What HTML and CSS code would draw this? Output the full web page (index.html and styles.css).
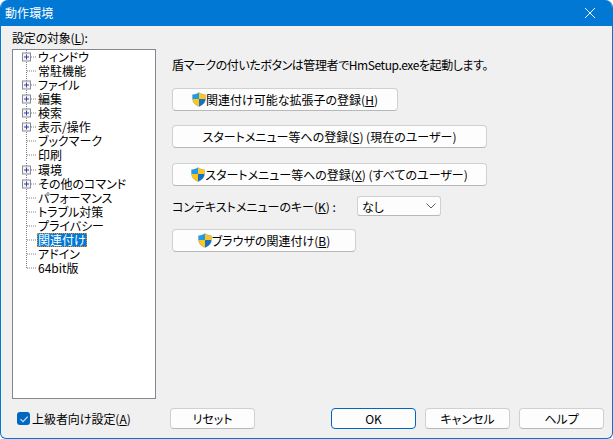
FILE: index.html
```html
<!DOCTYPE html>
<html lang="ja">
<head>
<meta charset="utf-8">
<title>動作環境</title>
<link rel="stylesheet" href="styles.css">
</head>
<body>
<svg class="defs" width="0" height="0" aria-hidden="true">
  <symbol id="shield" viewBox="0 0 14 15">
    <path d="M7 0.5C5 2 3 2.6 0.5 2.7V7H7z" fill="#1f9be8"/>
    <path d="M7 0.5C9 2 11 2.6 13.5 2.7V7H7z" fill="#ffc61a"/>
    <path d="M0.5 7C0.7 10.8 3.4 13.2 7 14.5V7z" fill="#ffc61a"/>
    <path d="M13.5 7C13.3 10.8 10.6 13.2 7 14.5V7z" fill="#1472c4"/>
    <path d="M7 0.5C5 2 3 2.6 0.5 2.7V7C0.7 10.8 3.4 13.2 7 14.5C10.6 13.2 13.3 10.8 13.5 7V2.7C11 2.6 9 2 7 0.5z" fill="none" stroke="#5a7f9c" stroke-width=".5" opacity=".6"/>
  </symbol>
  <symbol id="leaf" viewBox="0 0 26 14">
    <path d="M13.5 0V14M14 7H24" stroke="#808080" stroke-dasharray="1 1" fill="none"/>
  </symbol>
  <symbol id="end" viewBox="0 0 26 14">
    <path d="M13.5 0V7M14 7H24" stroke="#808080" stroke-dasharray="1 1" fill="none"/>
  </symbol>
  <symbol id="node" viewBox="0 0 26 14">
    <path d="M13.5 0V14M14 7H24" stroke="#808080" stroke-dasharray="1 1" fill="none"/>
    <rect x="9.5" y="3" width="8" height="8" fill="#f4f4f8" stroke="#8a8a94"/>
    <path d="M11 7H16M13.5 4.5V9.5" stroke="#33449a" fill="none"/>
  </symbol>
</svg>
<div class="window">
  <header class="titlebar">
    <span class="title">動作環境</span>
    <svg class="close" width="10" height="10" viewBox="0 0 10 10"><path d="M0 0L10 10M10 0L0 10" stroke="#fff" fill="none"/></svg>
  </header>
  <div class="client">
    <div class="main">
      <section class="left">
        <div class="tree-label">設定の対象(<u>L</u>):</div>
        <ul class="tree">
          <li class="row"><svg class="twig"><use href="#node"/></svg><span class="item">ウィンドウ</span></li>
          <li class="row"><svg class="twig"><use href="#leaf"/></svg><span class="item">常駐機能</span></li>
          <li class="row"><svg class="twig"><use href="#node"/></svg><span class="item">ファイル</span></li>
          <li class="row"><svg class="twig"><use href="#node"/></svg><span class="item">編集</span></li>
          <li class="row"><svg class="twig"><use href="#node"/></svg><span class="item">検索</span></li>
          <li class="row"><svg class="twig"><use href="#node"/></svg><span class="item">表示/操作</span></li>
          <li class="row"><svg class="twig"><use href="#leaf"/></svg><span class="item">ブックマーク</span></li>
          <li class="row"><svg class="twig"><use href="#leaf"/></svg><span class="item">印刷</span></li>
          <li class="row"><svg class="twig"><use href="#node"/></svg><span class="item">環境</span></li>
          <li class="row"><svg class="twig"><use href="#node"/></svg><span class="item">その他のコマンド</span></li>
          <li class="row"><svg class="twig"><use href="#leaf"/></svg><span class="item">パフォーマンス</span></li>
          <li class="row"><svg class="twig"><use href="#leaf"/></svg><span class="item">トラブル対策</span></li>
          <li class="row"><svg class="twig"><use href="#leaf"/></svg><span class="item">プライバシー</span></li>
          <li class="row"><svg class="twig"><use href="#leaf"/></svg><span class="item selected">関連付け</span></li>
          <li class="row"><svg class="twig"><use href="#leaf"/></svg><span class="item">アドイン</span></li>
          <li class="row"><svg class="twig"><use href="#end"/></svg><span class="item">64bit版</span></li>
        </ul>
      </section>
      <section class="panel">
        <p class="note">盾マークの付いたボタンは管理者でHmSetup.exeを起動します。</p>
        <button class="btn btn-assoc"><svg class="shield"><use href="#shield"/></svg>関連付け可能な拡張子の登録(<u>H</u>)</button>
        <button class="btn btn-wide gap-37">スタートメニュー等への登録(<u>S</u>) (現在のユーザー)</button>
        <button class="btn btn-wide gap-15"><svg class="shield"><use href="#shield"/></svg>スタートメニュー等への登録(<u>X</u>) (すべてのユーザー)</button>
        <div class="key-row">
          <span class="key-label">コンテキストメニューのキー(<u>K</u>) :</span>
          <span class="combo"><span>なし</span><svg width="10" height="6" viewBox="0 0 10 6"><path d="M0.5 0.5L5 5L9.5 0.5" stroke="#606060" fill="none"/></svg></span>
        </div>
        <button class="btn btn-browser"><svg class="shield"><use href="#shield"/></svg>ブラウザの関連付け(<u>B</u>)</button>
      </section>
    </div>
    <footer class="footer">
      <label class="check"><span class="box"><svg width="10" height="10" viewBox="0 0 10 10"><path d="M1.5 5.2L4 7.7L8.7 2.6" stroke="#cfe3f5" fill="none" stroke-width="1.2"/></svg></span><span class="check-text">上級者向け設定(<u>A</u>)</span></label>
      <button class="btn btn-foot btn-reset">リセット</button>
      <span class="spacer"></span>
      <button class="btn btn-foot btn-default">OK</button>
      <button class="btn btn-foot">キャンセル</button>
      <button class="btn btn-foot">ヘルプ</button>
    </footer>
  </div>
</div>
</body>
</html>
```

FILE: styles.css
```css
* { box-sizing: border-box; }
html, body { margin: 0; padding: 0; }
body {
  width: 613px;
  height: 439px;
  overflow: hidden;
  background: #fff;
  font-family: "Noto Sans CJK JP", "Noto Sans", sans-serif;
  font-size: 12px;
  color: #000;
  font-feature-settings: "palt";
}
.defs { display: block; height: 0; }
u { text-underline-offset: 1px; }
.window {
  width: 613px;
  height: 439px;
  display: flex;
  flex-direction: column;
  border: 1px solid #0078d4;
  border-top: 0;
  border-radius: 8px 8px 6px 6px;
  overflow: hidden;
  background: #f0f0f0;
}
.titlebar {
  height: 26px;
  flex: none;
  background: #0078d4;
  color: #fff;
  display: flex;
  align-items: center;
  justify-content: space-between;
  padding: 0 17px 0 4px;
  font-size: 12px;
}
.title { line-height: 26px; letter-spacing: 0.1px; }
.close { display: block; }
.client {
  flex: 1;
  display: flex;
  flex-direction: column;
  padding: 0 8px 9px 11px;
}
.main { flex: 1; display: flex; min-height: 0; }
.left { width: 144px; flex: none; display: flex; flex-direction: column; }
.tree-label { height: 23px; line-height: 23px; letter-spacing: -0.2px; }
.tree {
  list-style: none;
  margin: 0;
  padding: 0;
  height: 350px;
  background: #fff;
  border: 1px solid #828790;
}
.row { display: flex; align-items: center; height: 14.07px; }
.twig { width: 26px; height: 14px; flex: none; display: block; }
.item { line-height: 14px; white-space: nowrap; padding: 0 1px; margin-left: -2px; }
.selected { background: #0078d4; color: #fff; outline: 1px dotted #f08a24; outline-offset: -1px; }
.panel {
  flex: 1;
  padding-left: 16px;
  display: flex;
  flex-direction: column;
  align-items: flex-start;
}
.note { margin: 30px 0 0; line-height: 18px; height: 18px; white-space: nowrap; letter-spacing: -0.42px; }
.btn {
  font: inherit;
  font-feature-settings: inherit;
  color: #000;
  height: 23px;
  padding: 0;
  background: #fdfdfd;
  border: 1px solid #d0d0d0;
  border-bottom-color: #b8b8b8;
  border-radius: 4px;
  display: flex;
  align-items: center;
  justify-content: center;
  white-space: nowrap;
}
.shield { width: 14px; height: 15px; flex: none; display: block; }
.btn-assoc { width: 226px; margin-top: 14px; }
.btn-wide { width: 315px; }
.gap-37 { margin-top: 14px; }
.gap-15 { margin-top: 15px; }
.key-row { display: flex; align-items: center; margin-top: 10px; height: 20px; }
.key-label { width: 185px; white-space: nowrap; }
.combo {
  width: 84px;
  height: 20px;
  padding: 0 4px;
  background: #fdfdfd;
  border: 1px solid #d0d0d0;
  border-bottom-color: #b8b8b8;
  border-radius: 3px;
  display: flex;
  align-items: center;
  justify-content: space-between;
}
.btn-browser { width: 184px; margin-top: 13px; }
.footer { flex: none; display: flex; align-items: center; height: 21px; }
.check { width: 158px; display: flex; align-items: center; white-space: nowrap; padding-left: 5px; gap: 2px; }
.check-text { letter-spacing: -0.05px; }
.box {
  width: 13px;
  height: 13px;
  background: #0067c0;
  border-radius: 3px;
  display: flex;
  align-items: center;
  justify-content: center;
}
.btn-foot { width: 85px; height: 21px; margin-left: 9px; }
.btn-reset { margin-left: 0; }
.spacer { flex: 1; }
.btn-default { border: 1px solid #0067c0; }
```
